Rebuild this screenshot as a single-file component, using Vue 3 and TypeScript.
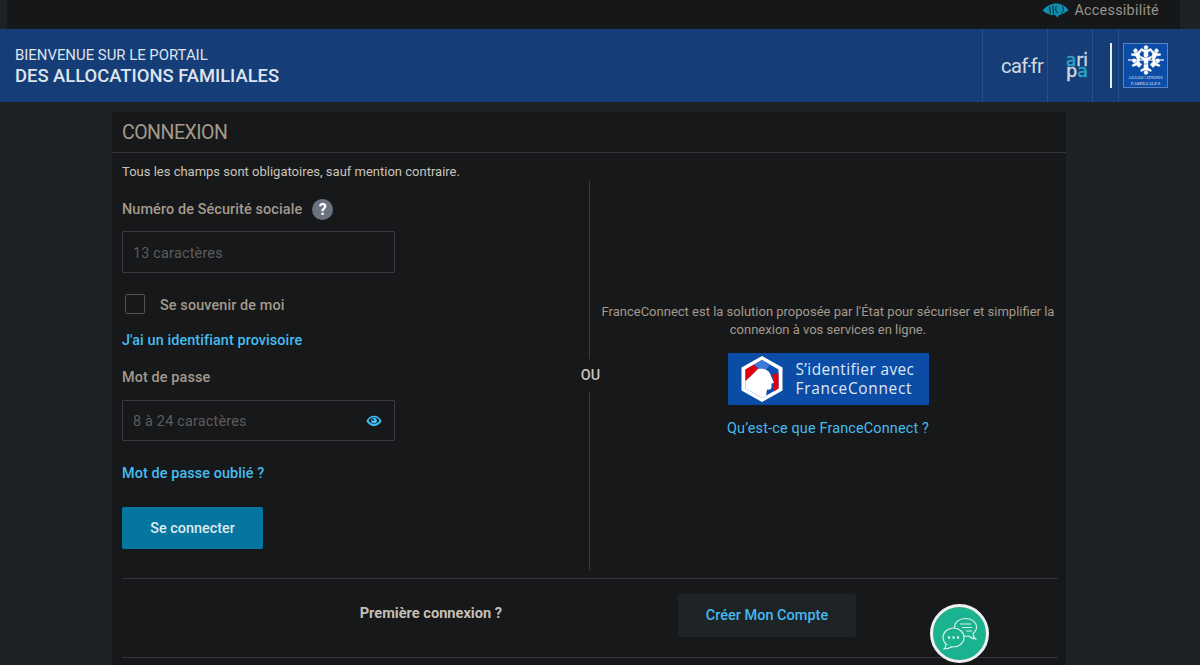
<template>
  <div class="page">
    <div class="topbar">
      <a class="access">
        <svg width="27" height="15" viewBox="0 0 27 15">
          <path d="M0.500 7.500C5 2.500 9 0.500 14 0.500C19 0.500 23 2.500 26.500 7C23.500 9.800 20 11.500 17 12L15.500 14.800L13.500 12.300C8 12.300 4 10.500 0.500 7.500Z" fill="#0f8fb3" />
          <path d="M7.500 3.500L8.500 10.500M10.700 2.500L11.700 11.500" stroke="#151719" stroke-width="1" fill="none" />
          <path d="M14.500 2.800C13 5 13.500 9 16 10.300" fill="none" stroke="#151719" stroke-width="1" />
          <path d="M20 2.800C22 5 21.500 8.500 19.500 10" fill="none" stroke="#151719" stroke-width="1" />
        </svg>
        <span>Accessibilité</span>
      </a>
    </div>

    <header class="banner">
      <div class="welcome">
        <div class="welcome-top">BIENVENUE SUR LE PORTAIL</div>
        <div class="welcome-main">DES ALLOCATIONS FAMILIALES</div>
      </div>
      <div class="logos">
        <div class="cell cell-caf">caf<span class="caf-dot">·</span>fr</div>
        <div class="cell cell-aripa">
          <svg width="26" height="50" viewBox="0 0 26 50" class="aripa">
            <text x="0" y="24.500" textLength="22" lengthAdjust="spacingAndGlyphs"><tspan class="ar">a</tspan><tspan class="wh">ri</tspan></text>
            <text x="0" y="35.500" textLength="22" lengthAdjust="spacingAndGlyphs"><tspan class="wh">p</tspan><tspan class="ar">a</tspan></text>
          </svg>
        </div>
        <div class="cell cell-empty"><div class="white-bar"></div></div>
        <div class="cell cell-cnaf">
          <div class="cnaf">
            <svg width="38" height="30" viewBox="0 0 38 30">
              <rect x="1" y="14" width="36" height="2" fill="#9fb6de" />
              <g fill="#fff" stroke="#fff" stroke-width="0.500">
                <g v-for="kid in kids" :key="kid.x + '-' + kid.y" :transform="`translate(${kid.x} ${kid.y}) rotate(${kid.r})`">
                  <circle cx="0" cy="-3.600" r="1.900" />
                  <path d="M-5 -2.500L-1.400 -1.200H1.400L5 -2.500L5.400 -1L2 1V4.500H-2V1L-5.400 -1Z" />
                </g>
              </g>
            </svg>
            <div class="cnaf-text">ALLOCATIONS<br />FAMILIALES</div>
          </div>
        </div>
      </div>
    </header>

    <main class="card">
      <h1 class="title">CONNEXION</h1>
      <div class="card-body">
        <p class="hint">Tous les champs sont obligatoires, sauf mention contraire.</p>

        <div class="columns">
          <form class="form" @submit.prevent>
            <div class="label-row">
              <label class="label">Numéro de Sécurité sociale</label>
              <span class="help">?</span>
            </div>
            <div class="field"><input class="input" placeholder="13 caractères" /></div>

            <label class="remember">
              <span class="box"></span>
              <span class="remember-text">Se souvenir de moi</span>
            </label>

            <a class="link provisional">J'ai un identifiant provisoire</a>

            <label class="label pass-label">Mot de passe</label>
            <div class="field field-pass">
              <input class="input" placeholder="8 à 24 caractères" />
              <svg class="eye" width="16" height="12" viewBox="0 0 16 12">
                <path d="M0.300 6C2.300 2.600 5 0.800 8 0.800S13.700 2.600 15.700 6C13.700 9.400 11 11.200 8 11.200S2.300 9.400 0.300 6Z" fill="#3dc0f0" />
                <path d="M2.500 5.500C4 3.300 5.800 2.300 8 2.300S12 3.300 13.500 5.500C12 7.800 10 9 8 9S4 7.800 2.500 5.500Z" fill="#17181b" />
                <circle cx="8" cy="5.600" r="2.900" fill="#3dc0f0" />
                <circle cx="7" cy="4.800" r="1" fill="#17181b" />
              </svg>
            </div>

            <a class="link forgot">Mot de passe oublié ?</a>

            <button class="submit" type="button">Se connecter</button>
          </form>

          <div class="sep">
            <div class="sep-line"></div>
            <div class="sep-label">OU</div>
            <div class="sep-line"></div>
          </div>

          <section class="fc">
            <p class="fc-text">FranceConnect est la solution proposée par l'État pour sécuriser et simplifier la connexion à vos services en ligne.</p>
            <a class="fc-btn">
              <svg width="44" height="48" viewBox="0 0 44 48">
                <path d="M22 1L42.500 12.500V35.500L22 47L1.500 35.500V12.500Z" fill="#fff" />
                <path d="M22 5L38.500 14.500V33.500L22 43L5.500 33.500V14.500Z" fill="#0b4db0" />
                <path d="M5.500 14.500L14 9.600L18 14L10 22L5.500 26Z" fill="#e1000f" />
                <path d="M38.500 18V33.500L33.500 36.500L34 27L32 20Z" fill="#e1000f" />
                <path d="M22 5L30 9.600L26 15H20L14 9.600Z" fill="#3f78d6" />
                <path d="M18 14C25 12.500 30 16 31 21L34 27.500L31.500 28.800L31.500 32.500C31 34.500 29.500 35 27 34.500L26 41L22 43L5.500 33.500V26L10 22Z" fill="#fff" />
              </svg>
              <span class="fc-label">
                <span class="fc-top">S’identifier avec</span>
                <span class="fc-name">FranceConnect</span>
              </span>
            </a>
            <a class="link fc-link">Qu’est-ce que FranceConnect ?</a>
          </section>
        </div>

        <div class="signup">
          <div class="signup-text">Première connexion ?</div>
          <a class="signup-btn">Créer Mon Compte</a>
        </div>
      </div>
    </main>

    <button class="chat" type="button" aria-label="Chat">
      <svg width="38" height="34" viewBox="0 0 38 34" fill="none" stroke="#d8f3ea" stroke-width="1.100">
        <path d="M24.500 1.500C30.500 1.500 35.500 5 35.500 10C35.500 13 34 15 32 16.500C32 18.500 33 20.500 34.500 22C31 21.500 29 20.500 27.500 19C26.500 19.200 25.500 19.300 24.500 19.300C18.500 19.300 13.500 15.500 13.500 10.500C13.500 5 18.500 1.500 24.500 1.500Z" />
        <path d="M19 7H30M21 10.500H31M25 14H31" />
        <ellipse cx="12.500" cy="20.500" rx="10.500" ry="9.500" fill="#1bb28f" />
        <path d="M5 27C5 29 4.500 30.800 3 32C6.500 32 9 31 11 29.800" fill="#1bb28f" />
        <circle cx="8" cy="20.500" r="0.700" fill="#d8f3ea" />
        <circle cx="12.500" cy="20.500" r="0.700" fill="#d8f3ea" />
        <circle cx="17" cy="20.500" r="0.700" fill="#d8f3ea" />
      </svg>
    </button>
  </div>
</template>

<script setup lang="ts">
interface Kid {
  x: number
  y: number
  r: number
}

// the little figures of the CAF snowflake
const kids: Kid[] = [
  { x: 19, y: 6, r: 0 },
  { x: 10, y: 9, r: -25 },
  { x: 28, y: 9, r: 25 },
  { x: 19, y: 14, r: 0 },
  { x: 10, y: 18, r: -50 },
  { x: 28, y: 18, r: 50 },
  { x: 19, y: 24, r: 180 }
]
</script>

<style>
html,
body {
  margin: 0;
  background: #1e2226;
  overflow: hidden;
}
</style>

<style scoped>
.page {
  position: relative;
  height: 665px;
  overflow: hidden;
  font-family: Roboto, "Liberation Sans", sans-serif;
  background: #1e2226;
}

.topbar {
  height: 29px;
  margin: 0 20px 0 7px;
  background: #151719;
  display: flex;
  justify-content: flex-end;
}

.access {
  display: flex;
  align-items: center;
  gap: 5px;
  height: 21px;
  margin-right: 21px;
  color: #9a9288;
  font-size: 14.400px;
  letter-spacing: 0.250px;
}

.banner {
  height: 73px;
  background: #153d78;
  display: flex;
  justify-content: space-between;
}

.welcome {
  padding: 17px 0 0 15px;
  color: #dfe4ec;
}

.welcome-top {
  font-size: 14.900px;
  line-height: 18px;
}

.welcome-main {
  font-size: 18.400px;
  font-weight: 500;
  line-height: 24px;
}

.logos {
  display: flex;
  margin-right: 22px;
}

.cell {
  height: 73px;
  border-left: 1px solid #25508f;
  box-sizing: border-box;
  display: flex;
  align-items: center;
}

.cell-caf {
  width: 65px;
  padding-left: 18px;
  color: #d3d9e2;
  font-size: 20.200px;
  letter-spacing: -0.600px;
}

.caf-dot {
  margin: 0 -1px;
}

.cell-aripa {
  width: 45px;
  padding-left: 18px;
}

.aripa {
  font-family: "DejaVu Sans", sans-serif;
  font-size: 18px;
  stroke-width: 0.500px;
}

.ar {
  fill: #2ba4c8;
  stroke: #2ba4c8;
}

.wh {
  fill: #d3d9e2;
  stroke: #d3d9e2;
}

.cell-empty {
  width: 26px;
  justify-content: flex-end;
}

.white-bar {
  width: 2px;
  height: 45px;
  background: #e8ecf2;
  margin-right: 6px;
}

.cell-cnaf {
  width: 60px;
  padding-left: 4px;
}

.cnaf {
  width: 45px;
  height: 45px;
  box-sizing: border-box;
  background: #0b4da6;
  border: 1px solid #5a84c0;
  display: flex;
  flex-direction: column;
  align-items: center;
  padding-top: 1px;
}

.cnaf-text {
  font-family: "Liberation Serif", serif;
  font-size: 5px;
  line-height: 6px;
  color: #dfe8f5;
  text-align: center;
  white-space: nowrap;
}

.card {
  width: 954px;
  height: 563px;
  margin: 10px 0 0 112px;
  background: #17181a;
}

.title {
  margin: 0;
  height: 41px;
  padding-left: 10px;
  border-bottom: 1px solid #33353a;
  font-size: 19.500px;
  font-weight: 400;
  line-height: 41px;
  letter-spacing: -0.500px;
  color: #a39a8c;
  box-sizing: border-box;
}

.card-body {
  padding: 0 8px 0 10px;
}

.hint {
  margin: 0;
  padding: 10px 0 1px;
  font-size: 13px;
  line-height: 17px;
  color: #c9c4bb;
}

.columns {
  display: flex;
  height: 397px;
  border-bottom: 1px solid #33353a;
}

.form {
  width: 440px;
  padding-top: 16px;
  display: flex;
  flex-direction: column;
  align-items: flex-start;
  flex-shrink: 0;
}

.label-row {
  display: flex;
  align-items: center;
  gap: 10px;
  height: 24px;
}

.label {
  font-size: 14.400px;
  font-weight: 500;
  color: #a39a8d;
  letter-spacing: 0.120px;
}

.help {
  width: 21px;
  height: 21px;
  border-radius: 50%;
  background: #6b7280;
  color: #fff;
  font-size: 16px;
  font-weight: 700;
  line-height: 21px;
  text-align: center;
}

.field {
  position: relative;
  width: 273px;
  height: 42px;
  margin-top: 10px;
}

.field-pass {
  height: 41px;
  margin-top: 14px;
}

.input {
  width: 100%;
  height: 100%;
  box-sizing: border-box;
  background: transparent;
  border: 1px solid #3a3b3e;
  border-radius: 1px;
  padding: 2px 10px 0;
  font-family: inherit;
  font-size: 14.400px;
  letter-spacing: 0.200px;
  color: #ccc;
  outline: none;
}

.input::placeholder {
  color: #5d5c5a;
  opacity: 1;
}

.eye {
  position: absolute;
  right: 13px;
  top: 15px;
}

.remember {
  display: flex;
  align-items: center;
  gap: 15px;
  margin: 21px 0 0 3px;
  font-size: 14.400px;
  font-weight: 500;
  color: #a39a8d;
  letter-spacing: 0.120px;
}

.remember-text {
  padding-top: 2px;
}

.box {
  width: 20px;
  height: 20px;
  box-sizing: border-box;
  border: 1px solid #55524e;
  border-radius: 2px;
}

.link {
  font-size: 14.400px;
  font-weight: 500;
  color: #45bdf0;
  letter-spacing: 0.100px;
}

.provisional {
  margin-top: 18px;
}

.pass-label {
  margin-top: 20px;
}

.forgot {
  margin-top: 24px;
}

.submit {
  width: 141px;
  height: 42px;
  margin-top: 25px;
  background: #04769f;
  border: 0;
  border-radius: 2px;
  color: #dfe9ee;
  font-family: inherit;
  font-size: 14.400px;
  font-weight: 500;
}

.sep {
  width: 1px;
  height: 389px;
  display: flex;
  flex-direction: column;
  align-items: center;
  flex-shrink: 0;
  margin-left: 27px;
}

.sep-line {
  width: 1px;
  flex: 1;
  background: #3a3b3e;
}

.sep-label {
  height: 33px;
  line-height: 33px;
  font-size: 14.400px;
  font-weight: 500;
  color: #c9c4bb;
  margin-left: 2px;
}

.fc {
  flex: 1;
  min-width: 0;
  height: 390px;
  display: flex;
  flex-direction: column;
  align-items: center;
  padding: 122px 0 0 8px;
  box-sizing: border-box;
}

.fc-text {
  margin: 0;
  font-size: 13px;
  line-height: 18px;
  text-align: center;
  color: #a39a8d;
}

.fc-btn {
  width: 201px;
  height: 52px;
  margin-top: 14px;
  background: #0b4da6;
  border-radius: 1px;
  display: flex;
  align-items: center;
  gap: 12px;
  padding-left: 12px;
  box-sizing: border-box;
  flex-shrink: 0;
}

.fc-label {
  display: flex;
  flex-direction: column;
  color: #dfe8f5;
  font-family: "Open Sans", sans-serif;
  font-size: 15.400px;
  line-height: 19px;
  letter-spacing: 0.400px;
  white-space: nowrap;
}

.fc-name {
  font-weight: 500;
  letter-spacing: 0.700px;
}

.fc-link {
  margin-top: 15px;
  font-weight: 400;
  letter-spacing: 0.170px;
}

.signup {
  height: 78px;
  display: flex;
  border-bottom: 1px solid #33353a;
}

.signup-text {
  width: 556px;
  padding: 25px 176px 0 0;
  box-sizing: border-box;
  text-align: right;
  font-size: 14.600px;
  font-weight: 700;
  color: #c4bfb5;
}

.signup-btn {
  width: 178px;
  height: 43px;
  margin-top: 15px;
  background: #1e2326;
  border-radius: 2px;
  color: #45b8f0;
  font-size: 14.500px;
  font-weight: 500;
  line-height: 43px;
  text-align: center;
}

.chat {
  position: absolute;
  left: 930px;
  top: 604px;
  width: 59px;
  height: 59px;
  padding: 0;
  border: 3px solid #f1f1f1;
  border-radius: 50%;
  background: #1bb28f;
  box-sizing: border-box;
  display: flex;
  align-items: center;
  justify-content: center;
}
</style>
